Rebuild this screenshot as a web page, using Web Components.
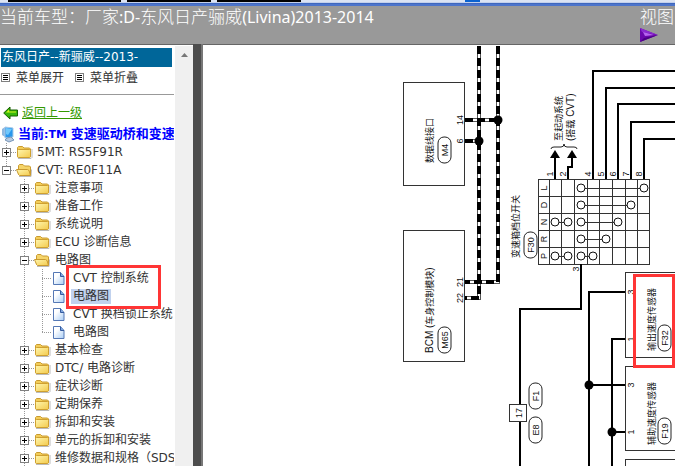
<!DOCTYPE html>
<html lang="zh-CN">
<head>
<meta charset="utf-8">
<title>维修手册</title>
<style>
html, body { margin: 0; height: 100%; }
body { overflow: hidden; background: #fff; color: #333; font: 12px/18px "DejaVu Sans", "Noto Sans CJK SC", sans-serif; }
</style>
</head>
<body>
<manual-app></manual-app>
<script>
const define = (name, html, setup) => {
  const template = document.createElement('template');
  template.innerHTML = html;
  customElements.define(name, class extends HTMLElement {
    constructor() {
      super();
      this.attachShadow({ mode: 'open' }).append(template.content.cloneNode(true));
    }
    connectedCallback() { if (setup) setup(this, this.shadowRoot); }
  });
};

define('window-edge', `
<style>
:host { display: block; flex: none; }
.tabs { display: flex; gap: 6px; height: 2px; padding-left: 8px; background: #dbe3f3; }
.tabs i { background: #000; width: 84px; }
.tabs i:first-child { width: 113px; }
.tabs b { margin-left: 158px; width: 15px; background: #0a62d0; }
.rim { height: 4px; background: linear-gradient(#c3d0ec 0 1px, #3f67bd 1px 2px, #4c74cb 2px); }
</style>
<div class="tabs"><i></i><i></i><i></i><b></b></div>
<div class="rim"></div>`);

define('page-header', `
<style>
:host { display: flex; justify-content: space-between; flex: none; height: 39px; box-sizing: border-box;
  background: #999; color: #fff; border-bottom: 1px solid #666;
  font: 300 17px/20px "Noto Sans CJK SC", sans-serif; }
h1 { margin: 0; font: inherit; white-space: nowrap; }
.la { font: 16px/20px "Noto Sans", "Liberation Sans", sans-serif; }
.view { display: flex; flex-direction: column; align-items: flex-start; width: 35px; }
button { display: block; border: 0; padding: 0; margin: 2px 0 0; background: none; height: 14px; }
svg { display: block; }
</style>
<h1>当前车型：厂家<span class="la">:D-</span>东风日产骊威<span class="la">(Livina)2013-2014</span></h1>
<div class="view"><span>视图</span>
<button aria-label="播放"><svg width="18" height="14" viewBox="0 0 18 14"><path d="M0 0L18 7L0 14Z" fill="#6b08ad"/><path d="M0 0L18 7L2 4Z" fill="#8a2ad0"/><path d="M3 4L14 7L5 8Z" fill="#b765f0"/><path d="M0 14L18 7L4 10Z" fill="#4b0085"/></svg></button></div>`);

define('list-button', `
<style>
:host { display: block; }
button { display: flex; align-items: center; gap: 6px; border: 0; padding: 0; background: none; color: inherit; font: inherit; white-space: nowrap; }
</style>
<button><svg width="9" height="9" viewBox="0 0 9 9" shape-rendering="crispEdges"><path fill="#fff" stroke="#808080" d="M.5.5h8v8h-8z"/><path stroke="#000" d="M2 2.5h5M2 4.5h5M2 6.5h5"/></svg><slot></slot></button>`);

const folderDefs = `<defs><linearGradient id="g" x2="1" y2="1"><stop stop-color="#fff6ae"/><stop offset="1" stop-color="#f3ca4c"/></linearGradient></defs>`;
const icons = {
  folder: `${folderDefs}<path d="M2 14.5h13l1-1V5" fill="none" stroke="#bbb"/><path d="M1.500 3.500l1-1h4l1.500 1.500h5.500l1 1v8h-13z" fill="#f3cd58" stroke="#c99a30"/><path d="M1.500 6.500l1-1h11l1 1v6l-1 1h-11l-1-1z" fill="url(#g)" stroke="#cfa030"/>`,
  open: `${folderDefs}<path d="M3 14.500h12l.5-7" fill="none" stroke="#bbb"/><path d="M2.500 12.500v-9l1-1h3.500l1.500 1.500h5l1 1v8z" fill="#f5d469" stroke="#c99a30"/><path d="M.5 7.500h11l1.500 1 1.500 5h-11l-1-1z" fill="url(#g)" stroke="#c99a30"/>`,
  file: `<defs><linearGradient id="g" x2="1" y2="1"><stop offset=".3" stop-color="#fff"/><stop offset="1" stop-color="#a9cdf5"/></linearGradient></defs><path d="M1.500 14.500V2.500h7l3.500 4v8z" fill="url(#g)" stroke="#5578b5"/><path d="M8.500 2.500v4H12" fill="#7ea7e0" stroke="#355b9f"/>`
};

define('tree-node', `
<style>
:host { display: block; background: repeating-linear-gradient(#999 0 1px, transparent 1px 2px) 6px 0 / 1px var(--line, 100%) no-repeat; }
:host([last]) { --line: 9px; }
.row { display: flex; align-items: center; height: 18px; padding-left: 2px; white-space: nowrap; }
button { flex: none; width: 9px; height: 9px; padding: 0; border: 0; background: #fff; }
.file button { visibility: hidden; }
svg { display: block; flex: none; }
.dots { flex: none; width: 5px; height: 1px; background: repeating-linear-gradient(90deg, #999 0 1px, transparent 1px 2px); }
.file .dots { width: 10px; margin-left: -5px; }
.icon { width: 17px; height: 16px; }
a { color: #333; text-decoration: none; margin-left: 2px; padding: 0 2px; line-height: 15px; }
:host([selected]) a { background: #c1d2ee; }
.children { padding-left: 18px; --line: 100%; }
</style>
<div class="row"><button aria-label="展开或折叠"><svg width="9" height="9" viewBox="0 0 9 9" shape-rendering="crispEdges"><path fill="#fff" stroke="#808080" d="M.5.5h8v8h-8z"/><path id="sign" stroke="#000"/></svg></button><span class="dots"></span><svg class="icon" viewBox="0 0 17 16"></svg><a href="#"></a></div>
<div class="children"><slot></slot></div>`, (el, root) => {
  const kind = el.getAttribute('kind') || 'folder';
  root.querySelector('.row').classList.add(kind);
  root.querySelector('.icon').innerHTML = icons[kind];
  root.querySelector('#sign').setAttribute('d', kind === 'open' ? 'M2 4.5h5' : 'M2 4.5h5M4.5 2v5');
  root.querySelector('a').textContent = el.getAttribute('label');
});

define('side-panel', `
<style>
:host { display: flex; flex: none; width: 193px; overflow: hidden; background: #fff; }
.content { position: relative; width: 174px; overflow: hidden; }
h2 { margin: 2px 2px 0 1px; padding-left: 1px; background: #069; color: #fff; font: inherit; line-height: 19px; white-space: nowrap; }
.tools { display: flex; gap: 11px; align-items: center; height: 21px; padding: 0 0 6px 1px; border-bottom: 1px solid #999; }
.back { display: flex; align-items: center; gap: 4px; height: 24px; padding: 6px 0 0 3px; color: #390; }
.current { display: flex; align-items: center; gap: 3px; height: 18px; padding-left: 1px; color: #00f; font-weight: bold; font-size: 13px; white-space: nowrap; }
.current span { font-size: 11px; }
svg { flex: none; }
.mark { position: absolute; left: 66px; top: 219px; width: 89px; height: 38px; border: 3px solid #ff3535; pointer-events: none; }
.scroll { flex: 1; margin-left: 1px; background: #f0f0f0; display: flex; justify-content: center; padding-top: 7px; }
</style>
<div class="content">
<h2>东风日产--新骊威--2013-</h2>
<div class="tools"><list-button>菜单展开</list-button><list-button>菜单折叠</list-button></div>
<a class="back" href="#"><svg width="15" height="14" viewBox="0 0 15 14"><path d="M.7 7L7 1v3h7.500v6H7v3z" fill="#38b80b" stroke="#176000"/><path d="M3 6.500L6 3.500v2h7v1z" fill="#d6f51d"/></svg>返回上一级</a>
<div class="current"><svg width="14" height="17" viewBox="0 0 14 17"><path d="M1 3l3-2v10l-3-2z" fill="#8fb8df"/><path d="M4 1l8 1v9l-8 1z" fill="#2997ec" stroke="#a8c9e8"/><path d="M5 2l6 1-4 6-2-1z" fill="#70c7fb"/><path d="M6 12l4-1 3 3-5 2-4-2z" fill="#b7cbe2" stroke="#7896b8"/></svg><div>当前<span>:TM </span>变速驱动桥和变速</div></div>
<tree-node label="5MT: RS5F91R"></tree-node>
<tree-node label="CVT: RE0F11A" kind="open" last>
<tree-node label="注意事项"></tree-node>
<tree-node label="准备工作"></tree-node>
<tree-node label="系统说明"></tree-node>
<tree-node label="ECU 诊断信息"></tree-node>
<tree-node label="电路图" kind="open">
<tree-node label="CVT 控制系统" kind="file"></tree-node>
<tree-node label="电路图" kind="file" selected></tree-node>
<tree-node label="CVT 换档锁止系统" kind="file"></tree-node>
<tree-node label="电路图" kind="file" last></tree-node>
</tree-node>
<tree-node label="基本检查"></tree-node>
<tree-node label="DTC/ 电路诊断"></tree-node>
<tree-node label="症状诊断"></tree-node>
<tree-node label="定期保养"></tree-node>
<tree-node label="拆卸和安装"></tree-node>
<tree-node label="单元的拆卸和安装"></tree-node>
<tree-node label="维修数据和规格（SDS"></tree-node>
</tree-node>
<div class="mark"></div>
</div>
<div class="scroll"><svg width="7" height="4" viewBox="0 0 7 4"><path d="M0 4L3.500 0L7 4z" fill="#777"/></svg></div>`);

define('wiring-diagram', `
<style>
:host { display: block; flex: 1; min-width: 0; overflow: hidden; background: #fff; }
svg { display: block; }
text { font: 10px "Liberation Sans", "Noto Sans CJK SC", sans-serif; fill: #111; }
.cjk { font-size: 9px; }
.mid { text-anchor: middle; font-size: 9px; }
.thin { fill: none; stroke: #333; shape-rendering: crispEdges; }
.wire { fill: none; stroke: #000; stroke-width: 2; shape-rendering: crispEdges; }
.oval { fill: none; stroke: #222; }
.ring { fill: #fff; stroke: #111; }
.edge { fill: none; stroke: #555; stroke-width: 4; }
.gap { fill: none; stroke: #fff; stroke-width: 2; }
.dash { fill: none; stroke: #000; stroke-width: 4; stroke-dasharray: 8 4; }
</style>
<svg width="472" height="420" viewBox="203 46 472 420" role="img" aria-label="电路图">
<g id="plan"></g>
</svg>`, (el, root) => {
  let s = '';
  const rect = (x, y, w, h) => s += `<rect class="thin" x="${x}.5" y="${y}.5" width="${w}" height="${h}"/>`;
  const wire = d => s += `<path class="wire" d="${d}"/>`;
  const dot = (x, y) => s += `<circle cx="${x}" cy="${y}" r="4.500"/>`;
  const label = (t, x, y, cls = '') => s += `<text class="${cls}" transform="translate(${x} ${y}) rotate(-90)">${t}</text>`;
  const num = (t, x, y) => label(t, x, y, 'mid');
  const oval = (t, x, y) => {
    s += `<rect class="oval" x="${x}" y="${y}" width="13" height="26" rx="6"/>`;
    num(t, x + 10, y + 13);
  };
  for (const d of ['M465 120H498', 'M465 141H479', 'M479 46V298H465', 'M498 46V282H465'])
    s += `<path class="edge" d="${d}"/><path class="gap" d="${d}"/><path class="dash" d="${d}"/>`;
  dot(498, 120); dot(479, 141);
  rect(403, 82, 61, 103); rect(403, 230, 61, 131);
  label('数据线接口', 433, 163, 'cjk'); oval('M4', 438, 137);
  label('BCM (<tspan class="cjk">车身控制模块</tspan>)', 433, 353); oval('M65', 438, 327);
  num('14', 463, 120); num('6', 463, 141); num('21', 463, 282); num('22', 463, 298);

  label('至起动系统', 562, 141, 'cjk');
  label('(<tspan class="cjk">搭载</tspan> CVT)', 574, 141);
  s += '<path class="oval" d="M551 149Q551 147 554 147H561Q564 147 564 144Q564 147 567 147H574Q577 147 577 149"/>';
  wire('M555 179V156'); wire('M568 179V167H572V156');
  s += '<path d="M555 150l5 8h-10zM572 150l5 8h-10z"/>';
  [[593, 71], [606, 88], [618, 104], [631, 122], [644, 139]].forEach(([x, y]) => wire(`M${x} 179V${y}H675`));
  [['1', 553], ['2', 566], ['4', 591], ['5', 604], ['6', 616], ['7', 629], ['8', 642]].forEach(([t, x]) => num(t, x, 174));

  rect(538, 179, 111, 85);
  [196, 213, 230, 247].forEach(y => s += `<path class="thin" d="M538 ${y}.5H650"/>`);
  [549, 561, 574, 587, 599, 612, 625, 637].forEach(x => s += `<path class="thin" d="M${x}.5 179V264"/>`);
  const link = (a, b, y) => s += `<path class="thin" d="M${a} ${y}.5H${b}"/><circle class="ring" cx="${a}" cy="${y}" r="4"/><circle class="ring" cx="${b}" cy="${y}" r="4"/>`;
  link(581, 644, 188); link(581, 631, 205); link(555, 568, 222); link(581, 618, 222);
  link(581, 606, 239); link(555, 568, 256); link(581, 593, 256);
  ['L', 'D', 'N', 'R', 'P'].forEach((t, i) => num(t, 547, 188 + 17 * i));
  label('变速箱档位开关', 519, 258, 'cjk'); oval('F30', 524, 232);
  num('3', 579, 269);
  wire('M581 264V309H520V466');

  wire('M625 292H589V466'); wire('M625 339H612V466');
  wire('M589 385H625'); wire('M612 432H625');
  dot(589, 385); dot(612, 432);
  rect(625, 272, 60, 85); rect(625, 366, 60, 84); rect(625, 459, 60, 20);
  num('3', 634, 292); num('1', 634, 339); num('3', 634, 385); num('1', 634, 432);
  label('输出速度传感器', 655, 351, 'cjk'); oval('F32', 658, 325);
  label('辅助速度传感器', 655, 445, 'cjk'); oval('F19', 658, 418);
  s += '<path fill="#fff" d="M510 404h17v17h-17z"/>';
  rect(509, 404, 17, 17); num('17', 522, 413);
  oval('F1', 529, 383); oval('E8', 529, 417);
  s += '<path fill="none" stroke="#ff3535" stroke-width="3" d="M634.500 275.500H673.500V366.500H634.500Z"/>';
  root.querySelector('#plan').innerHTML = s;
});

define('manual-app', `
<style>
:host { display: flex; flex-direction: column; height: 100vh; }
main { display: flex; flex: 1; min-height: 0; }
.divider { flex: none; width: 8px; background: #4d4d4d; border-right: 2px solid #777; margin-top: -1px; }
side-panel, wiring-diagram { margin-top: 1px; }
</style>
<window-edge></window-edge>
<page-header></page-header>
<main><side-panel></side-panel><div class="divider"></div><wiring-diagram></wiring-diagram></main>`);
</script>
</body>
</html>
